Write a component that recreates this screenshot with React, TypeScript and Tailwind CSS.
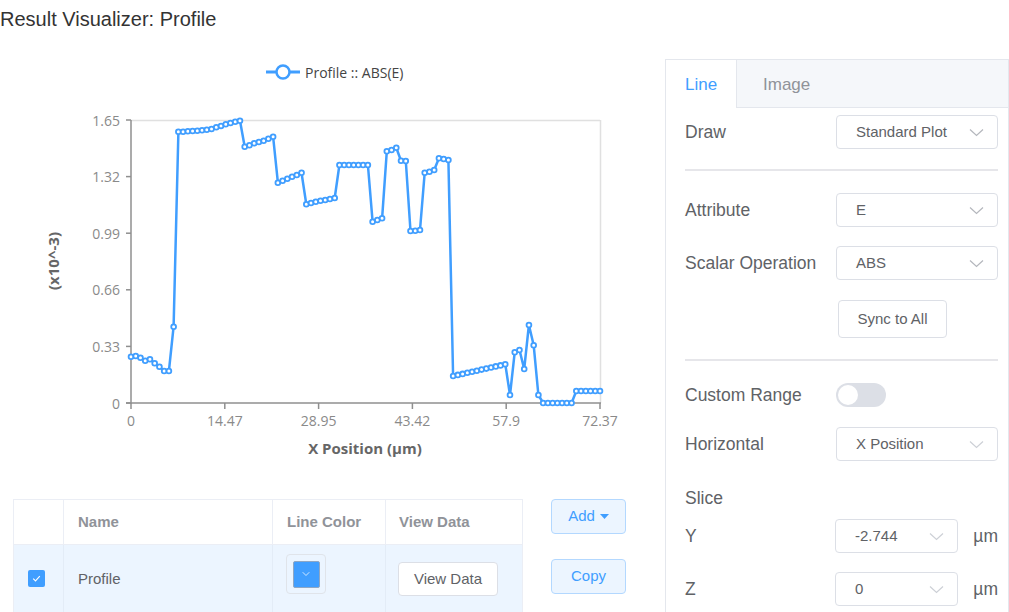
import { ChevronDown } from "lucide-react";

// pixel y of each sample, page coords (0 at y=403, 1.65 at y=120)
const ys = [
  356.7, 356, 357.7, 360.7, 359.3, 363.3, 366.7, 371, 371, 326.7,
  131.7, 131.7, 131.3, 131, 130.7, 130.3, 129.7, 129, 127.3, 126, 124.3, 123, 121.7, 120.7,
  146.7, 145.3, 143.3, 142, 140.7, 138.7, 136.7,
  182.7, 180.7, 178.7, 176.7, 175, 172.7,
  204.3, 203, 201.7, 200.7, 200, 199, 198,
  165, 165, 165, 165, 165, 165, 165,
  221.7, 220, 218.3,
  151.3, 150, 147.7,
  160.7, 161,
  231, 230.7, 230,
  172.7, 171.7, 170,
  158.3, 159, 160,
  376, 374.9, 373.9, 372.8, 371.7, 370.7, 369.6, 368.6, 367.5, 366.4, 365.4, 364.3,
  395, 352.3, 350, 369, 325, 345.3, 395,
  403, 403, 403, 403, 403, 403, 403,
  391, 391, 391, 391, 391, 391,
];

const px = (i: number) => 131 + (i * 469) / (ys.length - 1);

const yTicks = [
  { label: "1.65", y: 120 },
  { label: "1.32", y: 176.6 },
  { label: "0.99", y: 233.2 },
  { label: "0.66", y: 289.8 },
  { label: "0.33", y: 346.4 },
  { label: "0", y: 403 },
];

const xTicks = [
  { label: "0", x: 131 },
  { label: "14.47", x: 224.8 },
  { label: "28.95", x: 318.6 },
  { label: "43.42", x: 412.4 },
  { label: "57.9", x: 506.2 },
  { label: "72.37", x: 600 },
];

function Chart() {
  const pts = ys.map((y, i) => `${px(i).toFixed(1)},${y}`).join(" ");
  return (
    <svg width={640} height={459} viewBox="0 40 640 459" className="block" style={{ fontFamily: '"Open Sans", sans-serif' }}>
      {/* legend */}
      <line x1={266} y1={72} x2={300} y2={72} stroke="#409eff" strokeWidth={3} />
      <circle cx={283} cy={72} r={6.5} fill="#fff" stroke="#409eff" strokeWidth={2.5} />
      <text x={305} y={72} dominantBaseline="central" fontSize={14} fill="#444">
        Profile :: ABS(E)
      </text>

      {/* frame */}
      <line x1={131} y1={120.5} x2={600} y2={120.5} stroke="#e0e0e0" strokeWidth={1.5} />
      <line x1={600.5} y1={120} x2={600.5} y2={403} stroke="#e0e0e0" strokeWidth={1.5} />
      <line x1={131} y1={120} x2={131} y2={404} stroke="#8f8f8f" strokeWidth={1.5} />
      <line x1={126} y1={403} x2={601} y2={403} stroke="#8f8f8f" strokeWidth={1.5} />

      {yTicks.map((t) => (
        <g key={t.label}>
          <line x1={126} y1={t.y} x2={131} y2={t.y} stroke="#8f8f8f" strokeWidth={1.5} />
          <text x={120} y={t.y} textAnchor="end" dominantBaseline="central" fontSize={14} fill="#8a8a8a">
            {t.label}
          </text>
        </g>
      ))}
      {xTicks.map((t) => (
        <g key={t.label}>
          <line x1={t.x} y1={403} x2={t.x} y2={409} stroke="#8f8f8f" strokeWidth={1.5} />
          <text x={t.x} y={420} textAnchor="middle" dominantBaseline="central" fontSize={14} fill="#8a8a8a">
            {t.label}
          </text>
        </g>
      ))}

      <text
        x={53}
        y={261}
        transform="rotate(-90 53 261)"
        textAnchor="middle"
        dominantBaseline="central"
        fontSize={15}
        fontWeight={700}
        fill="#666"
      >
        (x10^-3)
      </text>
      <text x={365} y={448} textAnchor="middle" dominantBaseline="central" fontSize={15} fontWeight={700} fill="#666">
        X Position (µm)
      </text>

      {/* series */}
      <polyline points={pts} fill="none" stroke="#409eff" strokeWidth={2.5} strokeLinejoin="round" />
      {ys.map((y, i) => (
        <circle key={i} cx={px(i)} cy={y} r={2.4} fill="#fff" stroke="#409eff" strokeWidth={1.8} />
      ))}
    </svg>
  );
}

function Chevron({ light }: { light?: boolean }) {
  return (
    <svg width="15" height="9" viewBox="0 0 15 9" className="shrink-0">
      <path d="M1 1.5 L7.5 7.5 L14 1.5" fill="none" stroke={light ? "#cdd0d6" : "#b4b7bd"} strokeWidth="1.2" />
    </svg>
  );
}

function Select({ value, width, light }: { value: string; width: string; light?: boolean }) {
  return (
    <div
      className={`flex h-[34px] items-center justify-between rounded-[4px] border border-[#dcdfe6] bg-white pl-[19px] pr-[13px] text-[15px] text-[#606266] ${width}`}
    >
      <span>{value}</span>
      <Chevron light={light} />
    </div>
  );
}

function Row({ label, children, className }: { label: string; children: React.ReactNode; className?: string }) {
  return (
    <div className={`flex items-center ${className ?? ""}`}>
      <div className="w-[151px] text-[17.5px] leading-[20px] text-[#606266]">{label}</div>
      {children}
    </div>
  );
}

function SidePanel() {
  return (
    <div className="ml-[25px] mt-[19px] h-[560px] w-[360px] border border-[#e4e7ed] bg-white">
      {/* tabs */}
      <div className="flex h-[48px] border-b border-[#e4e7ed] bg-[#f5f7fa] pt-[2px] text-[17px]">
        <div className="-mb-px -mt-[2px] flex w-[71px] items-center border-r border-[#e4e7ed] bg-white pl-[19px] pt-[2px] text-[#409eff]">
          Line
        </div>
        <div className="flex items-center pl-[26px] text-[#909399]">Image</div>
      </div>

      <div className="w-[332px] pl-[19px]">
        <Row label="Draw" className="mt-[7px]">
          <Select value="Standard Plot" width="w-[162px]" />
        </Row>
        <div className="mt-[20px] h-[2px] bg-[#e6e6ea]" />
        <Row label="Attribute" className="mt-[22px]">
          <Select value="E" width="w-[162px]" />
        </Row>
        <Row label="Scalar Operation" className="mt-[19px]">
          <Select value="ABS" width="w-[162px]" />
        </Row>
        <div className="mt-[20px] flex pl-[153px]">
          <button className="flex h-[38px] w-[109px] items-center justify-center rounded-[4px] border border-[#dcdfe6] bg-white text-[15px] text-[#606266]">
            Sync to All
          </button>
        </div>
        <div className="mt-[21px] h-[2px] bg-[#e6e6ea]" />
        <Row label="Custom Range" className="mt-[22px]">
          <div className="relative h-[24px] w-[50px] rounded-full bg-[#dcdfe6]">
            <div className="absolute left-[2px] top-[2px] h-[20px] w-[20px] rounded-full bg-white" />
          </div>
        </Row>
        <Row label="Horizontal" className="mt-[20px]">
          <Select value="X Position" width="w-[162px]" light />
        </Row>
        <div className="mt-[27px] h-[20px] text-[17.5px] leading-[20px] text-[#606266]">Slice</div>
        <Row label="Y" className="mt-[11px]">
          <Select value="-2.744" width="w-[124px]" light />
          <span className="ml-[15px] text-[17.5px] text-[#606266]">µm</span>
        </Row>
        <Row label="Z" className="mt-[19px]">
          <Select value="0" width="w-[124px]" light />
          <span className="ml-[15px] text-[17.5px] text-[#606266]">µm</span>
        </Row>
      </div>
    </div>
  );
}

function Table() {
  return (
    <div className="ml-[13px] w-[510px] border-l border-r border-t border-[#ebeef5] text-[15px]">
      <div className="flex h-[45px] border-b border-[#ebeef5] font-bold text-[#909399]">
        <div className="w-[50px] border-r border-[#ebeef5]" />
        <div className="flex w-[209px] items-center border-r border-[#ebeef5] px-[14px]">Name</div>
        <div className="flex w-[113px] items-center border-r border-[#ebeef5] px-[14px]">Line Color</div>
        <div className="flex flex-1 items-center px-[13px]">View Data</div>
      </div>
      <div className="flex h-[68px] bg-[#ecf5ff] text-[#606266]">
        <div className="flex w-[50px] items-center border-r border-[#e3ecf7] pl-[14px]">
          <div className="mb-[2px] flex h-[17px] w-[17px] items-center justify-center rounded-[2px] bg-[#409eff]">
            <svg width="11" height="11" viewBox="0 0 11 11">
              <path d="M2.2 5.6 L4.5 7.9 L8.8 3.2" fill="none" stroke="#fff" strokeWidth="1.1" />
            </svg>
          </div>
        </div>
        <div className="flex w-[209px] items-center border-r border-[#e3ecf7] px-[14px]">Profile</div>
        <div className="flex w-[113px] items-center border-r border-[#e3ecf7] pl-[13px]">
          <div className="mb-[10px] flex h-[40px] w-[40px] items-center justify-center rounded-[4px] border border-[#e0e4ea] bg-[#ecf5ff]">
            <div className="flex h-[27px] w-[27px] items-center justify-center rounded-[2px] border border-[#8fa7c4] bg-[#409eff]">
              <ChevronDown size={12} strokeWidth={1.5} className="text-white" />
            </div>
          </div>
        </div>
        <div className="flex flex-1 items-center pl-[12px]">
          <button className="flex h-[34px] w-[100px] items-center justify-center rounded-[4px] border border-[#dcdfe6] bg-white text-[15px] text-[#606266]">
            View Data
          </button>
        </div>
      </div>
    </div>
  );
}

export default function App() {
  return (
    <div
      className="h-[612px] w-[1009px] overflow-hidden bg-white"
      style={{ fontFamily: '"Liberation Sans", Arial, sans-serif' }}
    >
      <div className="h-[40px] pt-[5px] text-[20px] leading-[28px] text-[#333]">Result Visualizer: Profile</div>
      <div className="flex">
        <div className="w-[640px]">
          <Chart />
          <div className="flex">
            <Table />
            <div className="ml-[28px] flex w-[75px] flex-col">
              <button className="flex h-[35px] items-center justify-center gap-[5px] rounded-[4px] border border-[#b3d8ff] bg-[#ecf5ff] text-[15px] text-[#409eff]">
                Add
                <svg width="9" height="6" viewBox="0 0 9 6">
                  <path d="M0 0 L9 0 L4.5 5 Z" fill="#409eff" />
                </svg>
              </button>
              <button className="mt-[25px] flex h-[35px] items-center justify-center rounded-[4px] border border-[#b3d8ff] bg-[#ecf5ff] text-[15px] text-[#409eff]">
                Copy
              </button>
            </div>
          </div>
        </div>
        <SidePanel />
      </div>
    </div>
  );
}
